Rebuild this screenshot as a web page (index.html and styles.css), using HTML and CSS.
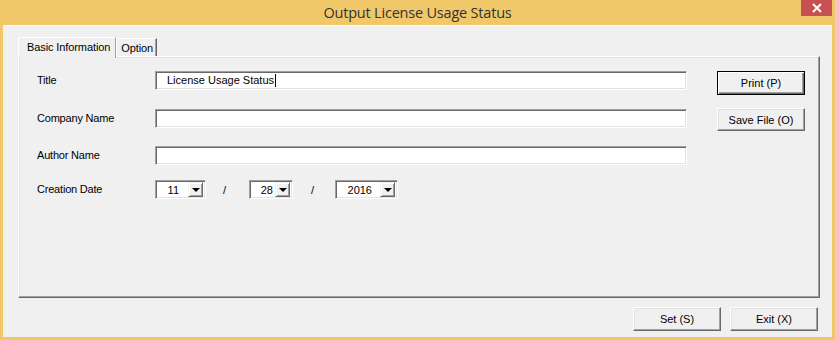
FILE: index.html
```html
<!DOCTYPE html>
<html>
<head>
<meta charset="utf-8">
<link rel="stylesheet" href="styles.css">
</head>
<body>
<div class="window">
  <div class="titlebar">
    <span class="title">Output License Usage Status</span>
    <span class="close"><svg width="12" height="10" viewBox="0 0 12 10"><path d="M2 1 L10 9 M10 1 L2 9" stroke="#fff" stroke-width="2"/></svg></span>
  </div>
  <div class="client">
    <div class="tabs">
      <div class="tab active">Basic Information</div>
      <div class="tab">Option</div>
    </div>
    <div class="panel">
      <div class="form">
        <div class="row r1"><span class="label">Title</span><div class="input">License Usage Status<span class="caret"></span></div></div>
        <div class="row r2"><span class="label">Company Name</span><div class="input"></div></div>
        <div class="row r3"><span class="label">Author Name</span><div class="input"></div></div>
        <div class="row r4"><span class="label">Creation Date</span>
          <div class="dates">
            <div class="combo c1"><span class="val">11</span><span class="arrow"></span></div>
            <span class="slash s1">/</span>
            <div class="combo c2"><span class="val">28</span><span class="arrow"></span></div>
            <span class="slash s2">/</span>
            <div class="combo c3"><span class="val">2016</span><span class="arrow"></span></div>
          </div>
        </div>
      </div>
      <div class="side">
        <div class="btn default">Print (P)</div>
        <div class="btn save">Save File (O)</div>
      </div>
    </div>
    <div class="footer">
      <div class="btn foot">Set (S)</div>
      <div class="btn foot">Exit (X)</div>
    </div>
  </div>
</div>
</body>
</html>
```
FILE: styles.css
```css
* { box-sizing: border-box; }
html, body { margin: 0; padding: 0; }
body { width: 835px; height: 340px; overflow: hidden; background: #f0c86a; font-family: "Liberation Sans", Arial, sans-serif; font-size: 11px; color: #000; }
.window { width: 835px; height: 340px; background: #f0c86a; display: flex; flex-direction: column; padding: 0 3px 3px 3px; }
.titlebar { height: 25px; position: relative; display: flex; align-items: center; justify-content: center; }
.title { font-family: "Open Sans", "Liberation Sans", sans-serif; font-size: 14.5px; color: #333; letter-spacing: -0.2px; margin-top: -1px; }
.close { position: absolute; right: 0; top: 0; width: 31px; height: 16px; background: #c75050; display: flex; align-items: center; justify-content: center; }
.client { flex: 1; background: #f0f0f0; border-top: 1px solid #fafafa; padding: 9px 12px 0 15px; display: flex; flex-direction: column; }
.tabs { display: flex; align-items: flex-end; height: 21px; position: relative; z-index: 2; }
.tab { height: 18px; padding: 0 3px 0 4px; line-height: 18px; font-size: 11px; letter-spacing: -0.1px; border-left: 1px solid #fff; border-top: 1px solid #fff; border-right: 1px solid #696969; box-shadow: inset -1px 0 0 #a0a0a0; background: #f0f0f0; }
.tab.active { height: 21px; margin-bottom: -2px; padding: 0 5px 0 8px; line-height: 18px; border-right: 1px solid #a0a0a0; box-shadow: none; }
.panel { height: 242px; width: 802px; border-left: 1px solid #fff; border-top: 1px solid #fff; border-right: 1px solid #696969; border-bottom: 1px solid #696969; box-shadow: inset -1px -1px 0 #a0a0a0, inset 1px 1px 0 #e3e3e3; display: flex; padding: 14px 0 0 18px; position: relative; }
.form { flex: none; width: 650px; }
.row { display: flex; align-items: center; height: 19px; }
.label { width: 118px; flex: none; font-size: 11px; letter-spacing: -0.2px; margin-top: -1px; }
.r2 { margin-top: 19px; }
.r3 { margin-top: 18px; }
.r4 { margin-top: 15px; }
.input { width: 532px; height: 19px; background: #fff; border-top: 1px solid #a0a0a0; border-left: 1px solid #a0a0a0; border-right: 1px solid #fff; border-bottom: 1px solid #fff; box-shadow: inset 1px 1px 0 #696969, inset -1px -1px 0 #e3e3e3; padding-left: 11px; font-size: 11px; line-height: 17px; display: flex; align-items: center; }
.caret { display: inline-block; width: 1px; height: 13px; background: #000; margin-left: 1px; }
.dates { display: flex; align-items: center; }
.combo { height: 19px; background: #fff; border-top: 1px solid #a0a0a0; border-left: 1px solid #a0a0a0; border-right: 1px solid #fff; border-bottom: 1px solid #fff; box-shadow: inset 1px 1px 0 #696969, inset -1px -1px 0 #e3e3e3; display: flex; align-items: center; justify-content: flex-end; padding: 2px; font-size: 11px; }
.c1 { width: 51px; }
.c2 { width: 44px; }
.c3 { width: 63px; }
.val { flex: 1; text-align: right; padding-right: 9px; }
.c2 .val { padding-right: 2px; }
.c3 .val { padding-right: 8px; }
.arrow { width: 15px; height: 15px; flex: none; background: #f0f0f0; border-left: 1px solid #f0f0f0; border-top: 1px solid #f0f0f0; border-right: 1px solid #696969; border-bottom: 1px solid #696969; box-shadow: inset 1px 1px 0 #fff, inset -1px -1px 0 #a0a0a0; position: relative; }
.arrow::after { content: ""; position: absolute; left: 3px; top: 5px; border-left: 4px solid transparent; border-right: 4px solid transparent; border-top: 4px solid #000; }
.slash { font-size: 11px; width: 4px; }
.s1 { margin: 0 22px 0 17px; }
.s2 { margin: 0 20px 0 18px; }
.side { display: flex; flex-direction: column; margin-left: 30px; }
.btn { width: 88px; height: 23px; background: #f0f0f0; border-left: 1px solid #fff; border-top: 1px solid #fff; border-right: 1px solid #696969; border-bottom: 1px solid #696969; box-shadow: inset -1px -1px 0 #a0a0a0, inset 1px 1px 0 #e3e3e3; display: flex; align-items: center; justify-content: center; font-size: 11px; }
.btn.default { height: 24px; border: 1px solid #000; box-shadow: inset 1px 1px 0 #fff, inset -1px -1px 0 #696969, inset -2px -2px 0 #a0a0a0; }
.btn.save { margin-top: 13px; }
.footer { display: flex; justify-content: flex-end; gap: 9px; margin-top: 9px; padding-right: 2px; }
.btn.foot { width: 88px; height: 24px; }
```
